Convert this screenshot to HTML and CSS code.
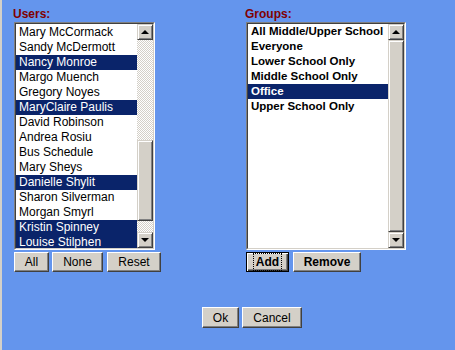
FILE: index.html
```html
<!DOCTYPE html>
<html lang="en">
<head>
    <meta charset="UTF-8">
    <title>Group Members</title>
    <link rel="stylesheet" href="styles.css">
</head>
<body>
<div class="dialog">
    <div class="columns">
        <div class="column users">
            <div class="field-label">Users:</div>
            <div class="listbox">
                <div class="listbox-inner">
                    <ul class="items items-scrolled">
                        <li class="item">Mary McCormack</li>
                        <li class="item">Sandy McDermott</li>
                        <li class="item selected">Nancy Monroe</li>
                        <li class="item">Margo Muench</li>
                        <li class="item">Gregory Noyes</li>
                        <li class="item selected">MaryClaire Paulis</li>
                        <li class="item">David Robinson</li>
                        <li class="item">Andrea Rosiu</li>
                        <li class="item">Bus Schedule</li>
                        <li class="item">Mary Sheys</li>
                        <li class="item selected">Danielle Shylit</li>
                        <li class="item">Sharon Silverman</li>
                        <li class="item">Morgan Smyrl</li>
                        <li class="item selected">Kristin Spinney</li>
                        <li class="item selected">Louise Stilphen</li>
                    </ul>
                    <div class="scrollbar checkered">
                        <div class="sb-button"><span class="arrow-up"></span></div>
                        <div class="sb-track">
                            <div class="sb-thumb sb-thumb-mid"></div>
                        </div>
                        <div class="sb-button"><span class="arrow-down"></span></div>
                    </div>
                </div>
            </div>
            <div class="button-row">
                <button type="button" class="btn btn-all">All</button>
                <button type="button" class="btn btn-none">None</button>
                <button type="button" class="btn btn-reset">Reset</button>
            </div>
        </div>
        <div class="column groups">
            <div class="field-label">Groups:</div>
            <div class="listbox">
                <div class="listbox-inner">
                    <ul class="items bold-items">
                        <li class="item">All Middle/Upper School</li>
                        <li class="item">Everyone</li>
                        <li class="item">Lower School Only</li>
                        <li class="item">Middle School Only</li>
                        <li class="item selected">Office</li>
                        <li class="item">Upper School Only</li>
                    </ul>
                    <div class="scrollbar">
                        <div class="sb-button"><span class="arrow-up"></span></div>
                        <div class="sb-track">
                            <div class="sb-thumb sb-thumb-full"></div>
                        </div>
                        <div class="sb-button"><span class="arrow-down"></span></div>
                    </div>
                </div>
            </div>
            <div class="button-row wide-gap">
                <button type="button" class="btn btn-bold btn-default btn-add"><span class="focus-ring">Add</span></button>
                <button type="button" class="btn btn-bold btn-remove">Remove</button>
            </div>
        </div>
    </div>
    <div class="footer">
        <button type="button" class="btn btn-tall btn-ok">Ok</button>
        <button type="button" class="btn btn-tall btn-cancel">Cancel</button>
    </div>
</div>
</body>
</html>
```

FILE: styles.css
```css
body {
    margin: 0;
    height: 350px;
    box-sizing: border-box;
    border-left: 2px solid #d4d0c8;
    background-color: #6495ed;
    font-family: "Liberation Sans", Arial, sans-serif;
    font-size: 12px;
    color: #000;
    overflow: hidden;
}

.dialog {
    padding: 7px 0 0 12px;
}

.columns {
    display: flex;
    gap: 91px;
}

.users {
    width: 141px;
}

.groups {
    width: 160px;
}

.field-label {
    height: 15px;
    line-height: 15px;
    margin-left: -1px;
    font-weight: bold;
    color: #800000;
}

/* sunken listbox frame */
.listbox {
    height: 228px;
    box-sizing: border-box;
    display: flex;
    border: 1px solid;
    border-color: #808080 #fff #fff #808080;
}

.listbox-inner {
    flex: 1;
    display: flex;
    min-width: 0;
    border: 1px solid;
    border-color: #404040 #d4d0c8 #d4d0c8 #404040;
    background-color: #fff;
}

.items {
    flex: 1;
    min-width: 0;
    margin: 0;
    padding: 0;
    list-style: none;
    overflow: hidden;
}

.items-scrolled {
    padding-top: 1px;
}

.item {
    height: 15px;
    line-height: 15px;
    padding-left: 3px;
    white-space: nowrap;
}

.item.selected {
    background-color: #0a246a;
    color: #fff;
}

.bold-items .item {
    font-weight: bold;
    font-size: 11.5px;
}

/* scrollbar */
.scrollbar {
    width: 16px;
    display: flex;
    flex-direction: column;
    background-color: #d4d0c8;
}

.checkered {
    background: repeating-conic-gradient(#d4d0c8 0 25%, #fff 0 50%) 0 0 / 2px 2px;
}

.sb-track {
    flex: 1;
    display: flex;
    flex-direction: column;
}

.sb-button,
.sb-thumb {
    box-sizing: border-box;
    background-color: #d4d0c8;
    border: 1px solid;
    border-color: #d4d0c8 #404040 #404040 #d4d0c8;
    box-shadow: inset 1px 1px #fff, inset -1px -1px #808080;
}

.sb-button {
    height: 16px;
    display: flex;
    align-items: center;
    justify-content: center;
}

.sb-thumb-mid {
    margin-top: 100px;
    height: 81px;
}

.sb-thumb-full {
    flex: 1;
}

.arrow-up,
.arrow-down {
    width: 0;
    height: 0;
    border-left: 4px solid transparent;
    border-right: 4px solid transparent;
}

.arrow-up {
    border-bottom: 4px solid #000;
    margin-top: -1px;
}

.arrow-down {
    border-top: 4px solid #000;
}

/* push buttons */
.button-row {
    display: flex;
    gap: 3px;
    margin-top: 2px;
}

.wide-gap {
    gap: 4px;
}

.btn {
    height: 20px;
    padding: 0;
    box-sizing: border-box;
    font-family: "Liberation Sans", Arial, sans-serif;
    font-size: 12px;
    color: #000;
    background-color: #d4d0c8;
    border: 1px solid;
    border-color: #fff #404040 #404040 #fff;
    box-shadow: inset -1px -1px #808080;
    flex-shrink: 0;
}

.btn-bold {
    font-weight: bold;
}

.btn-default {
    border-color: #000;
    box-shadow: inset 1px 1px #fff, inset -1px -1px #404040, inset -2px -2px #808080;
}

.focus-ring {
    padding: 1px 2px;
    outline: 1px dotted #000;
}

.btn-all { width: 35px; }
.btn-none { width: 51px; margin-right: 1px; }
.btn-reset { width: 54px; }
.btn-add { width: 43px; }
.btn-remove { width: 68px; }

.footer {
    display: flex;
    gap: 3px;
    margin: 35px 0 0 188px;
}

.btn-tall { height: 21px; }
.btn-ok { width: 37px; }
.btn-cancel { width: 60px; }
```
